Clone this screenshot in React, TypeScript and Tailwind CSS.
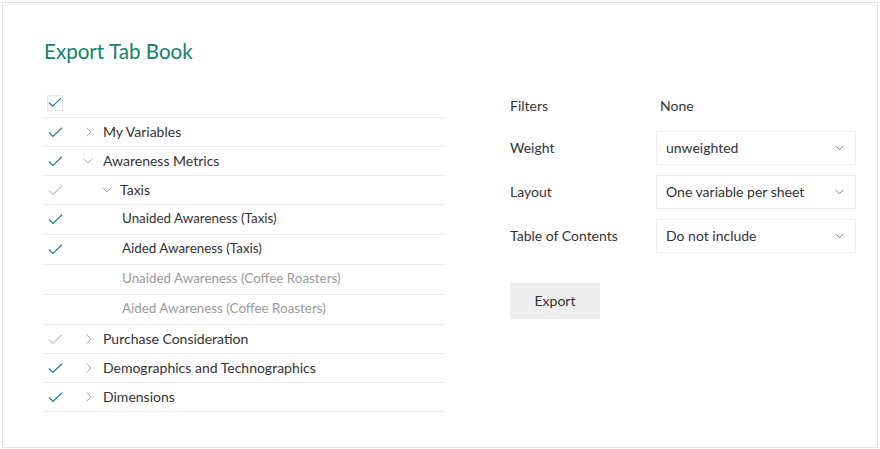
import { ReactNode } from 'react';

type Row = {
  label: string;
  check: 'on' | 'partial' | 'off';
  level: 0 | 1 | 2;
  caret?: 'right' | 'down';
  muted?: boolean;
};

const rows: Row[] = [
  { label: 'My Variables', check: 'on', level: 0, caret: 'right' },
  { label: 'Awareness Metrics', check: 'on', level: 0, caret: 'down' },
  { label: 'Taxis', check: 'partial', level: 1, caret: 'down' },
  { label: 'Unaided Awareness (Taxis)', check: 'on', level: 2 },
  { label: 'Aided Awareness (Taxis)', check: 'on', level: 2 },
  { label: 'Unaided Awareness (Coffee Roasters)', check: 'off', level: 2, muted: true },
  { label: 'Aided Awareness (Coffee Roasters)', check: 'off', level: 2, muted: true },
  { label: 'Purchase Consideration', check: 'partial', level: 0, caret: 'right' },
  { label: 'Demographics and Technographics', check: 'on', level: 0, caret: 'right' },
  { label: 'Dimensions', check: 'on', level: 0, caret: 'right' },
];

const Check = ({ color }: { color: string }) => (
  <svg width="15" height="11" viewBox="0 0 15 11" fill="none">
    <path d="M1 5.5 L5 9.5 L14 0.8" stroke={color} strokeWidth="1.2" />
  </svg>
);

// thin chevrons used in the tree
const Caret = ({ dir }: { dir: 'right' | 'down' }) =>
  dir === 'right' ? (
    <svg width="6" height="10" viewBox="0 0 6 10" fill="none">
      <path d="M0.8 0.7 L5 5 L0.8 9.3" stroke="#a8a8a8" strokeWidth="1" />
    </svg>
  ) : (
    <svg width="10" height="6" viewBox="0 0 10 6" fill="none">
      <path d="M0.7 0.8 L5 5 L9.3 0.8" stroke="#a8a8a8" strokeWidth="1" />
    </svg>
  );

const Select = ({ value }: { value: string }) => (
  <div className="flex h-[34px] w-[200px] items-center justify-between border border-[#ececec] pb-[2px] pl-[9px] pr-[11px] text-[14px] text-[#333]">
    <span>{value}</span>
    <svg width="9" height="6" viewBox="0 0 9 6" fill="none" className="mt-[2px]">
      <path d="M0.6 0.8 L4.5 4.8 L8.4 0.8" stroke="#777" strokeWidth="1" />
    </svg>
  </div>
);

const FieldRow = ({ label, children, className }: { label: string; children: ReactNode; className?: string }) => (
  <div className={`flex items-center ${className || ''}`}>
    <div className="w-[146px] pb-[2px] text-[14px] text-[#333]">{label}</div>
    {children}
  </div>
);

export default function App() {
  return (
    <div className="m-[2px] h-[446px] w-[876px] border border-[#e3e3e3] bg-white px-[41px] font-['Lato',sans-serif]">
      <h1 className="mt-[34px] text-[20.6px] leading-[28px] text-[#127f69]">Export Tab Book</h1>

      <div className="mt-[23px] flex">
        {/* variable tree */}
        <div className="w-[400px] shrink-0">
          <div className="flex h-[30px] items-center border-b border-[#e8e8e8]">
            <div className="ml-[3px] flex h-[16px] w-[16px] items-center justify-center border border-[#e4e4e4]">
              <Check color="#1d77bd" />
            </div>
          </div>
          {rows.map((r) => (
            <div
              key={r.label}
              className={`flex items-center border-b border-[#e8e8e8] ${r.level === 2 ? 'h-[30px]' : 'h-[29px]'}`}
            >
              <div className="ml-[4px] flex w-[15px] shrink-0 items-center">
                {r.check !== 'off' && <Check color={r.check === 'on' ? '#1d77bd' : '#c6c6c6'} />}
              </div>
              {r.level === 0 && (
                <div
                  className={`flex shrink-0 items-center ${
                    r.caret === 'right' ? 'ml-[23px] w-[17px]' : 'ml-[20px] w-[20px]'
                  }`}
                >
                  <Caret dir={r.caret!} />
                </div>
              )}
              {r.level === 1 && (
                <div className="ml-[39px] flex w-[18px] shrink-0 items-center">
                  <Caret dir="down" />
                </div>
              )}
              {r.level === 2 && <div className="ml-[59px]" />}
              <span
                className={`pb-[2px] ${r.level === 2 ? 'text-[13.4px]' : 'text-[14px]'} ${
                  r.muted ? 'text-[#9a9a9a]' : 'text-[#333]'
                }`}
              >
                {r.label}
              </span>
            </div>
          ))}
        </div>

        {/* options */}
        <div className="ml-[66px] pt-[3px]">
          <FieldRow label="Filters" className="h-[30px]">
            <span className="pb-[2px] pl-[4px] text-[14px] text-[#333]">None</span>
          </FieldRow>
          <FieldRow label="Weight" className="mt-[10px]">
            <Select value="unweighted" />
          </FieldRow>
          <FieldRow label="Layout" className="mt-[10px]">
            <Select value="One variable per sheet" />
          </FieldRow>
          <FieldRow label="Table of Contents" className="mt-[10px]">
            <Select value="Do not include" />
          </FieldRow>
          <button className="mt-[30px] h-[36px] w-[90px] bg-[#eeeeee] pb-[2px] text-[14px] text-[#333]">Export</button>
        </div>
      </div>
    </div>
  );
}
